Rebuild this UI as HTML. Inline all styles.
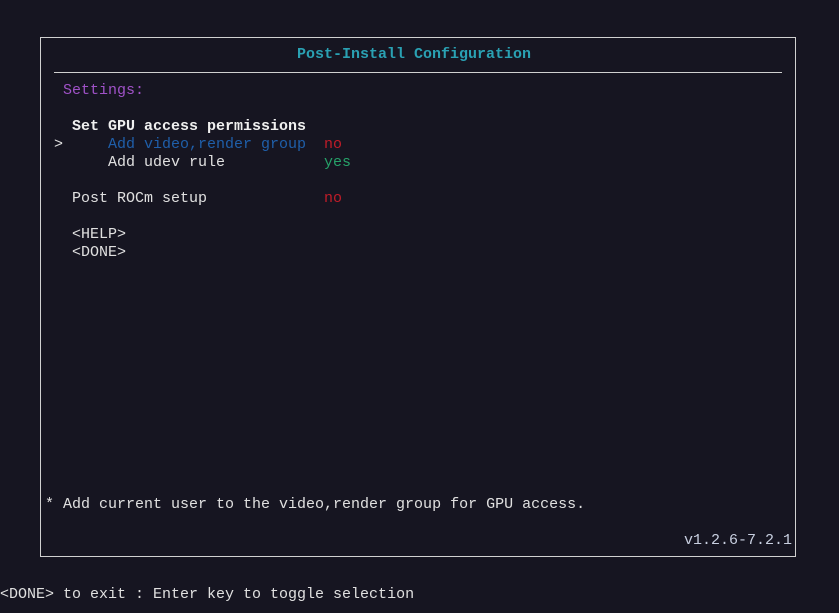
<!DOCTYPE html>
<html><head><meta charset="utf-8"><style>
html,body{margin:0;padding:0;background:#161521;width:839px;height:613px;overflow:hidden;position:relative;font-family:"Liberation Mono","DejaVu Sans Mono",monospace;font-size:15px;color:#d8d8d8}
.t{position:absolute;line-height:18px;white-space:pre;margin-top:1px}
.box{position:absolute;left:40px;top:37px;width:756px;height:520px;border:1px solid #d0d0d0;box-sizing:border-box}
.sep{position:absolute;left:54px;top:72px;width:728px;height:1px;background:#d0d0d0}
</style></head><body>
<div class="box"></div>
<div class="sep"></div>
<div class="t" style="left:297px;top:45px;color:#2aa1b3;font-weight:bold">Post-Install Configuration</div>
<div class="t" style="left:63px;top:81px;color:#a052c8">Settings:</div>
<div class="t" style="left:72px;top:117px;color:#f0f0f0;font-weight:bold">Set GPU access permissions</div>
<div class="t" style="left:54px;top:135px;color:#e0e0e0">&gt;</div>
<div class="t" style="left:108px;top:135px;color:#1f5faa">Add video,render group</div>
<div class="t" style="left:324px;top:135px;color:#c01c28">no</div>
<div class="t" style="left:108px;top:153px;color:#e0e0e0">Add udev rule</div>
<div class="t" style="left:324px;top:153px;color:#26a269">yes</div>
<div class="t" style="left:72px;top:189px;color:#e0e0e0">Post ROCm setup</div>
<div class="t" style="left:324px;top:189px;color:#c01c28">no</div>
<div class="t" style="left:72px;top:225px;color:#e0e0e0">&lt;HELP&gt;</div>
<div class="t" style="left:72px;top:243px;color:#e0e0e0">&lt;DONE&gt;</div>
<div class="t" style="left:45px;top:495px;color:#e0e0e0">* Add current user to the video,render group for GPU access.</div>
<div class="t" style="left:684px;top:531px;color:#c8cfe0">v1.2.6-7.2.1</div>
<div class="t" style="left:0px;top:585px;color:#e0e0e0">&lt;DONE&gt; to exit : Enter key to toggle selection</div>
</body></html>
